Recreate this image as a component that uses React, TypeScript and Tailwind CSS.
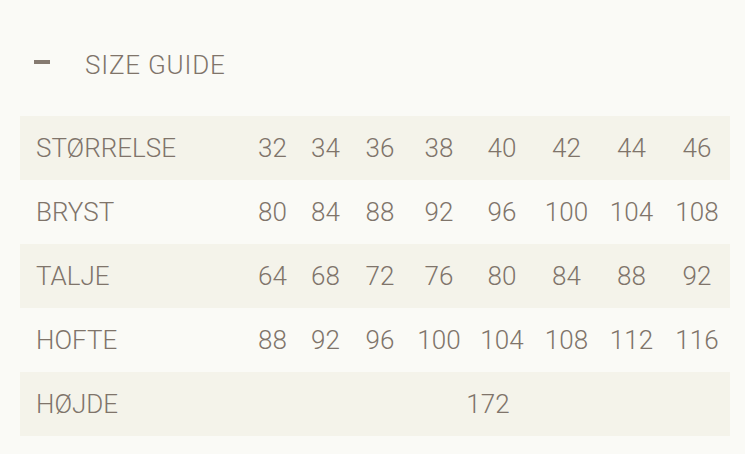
const sizes = ["32", "34", "36", "38", "40", "42", "44", "46"];

const rows: { label: string; values: string[] }[] = [
  { label: "BRYST", values: ["80", "84", "88", "92", "96", "100", "104", "108"] },
  { label: "TALJE", values: ["64", "68", "72", "76", "80", "84", "88", "92"] },
  { label: "HOFTE", values: ["88", "92", "96", "100", "104", "108", "112", "116"] },
];

const grid =
  "grid grid-cols-[226px_53px_53px_56px_62px_64px_65px_65px_66px] h-16 items-center";

function Row({ label, values, striped }: { label: string; values: string[]; striped?: boolean }) {
  return (
    <div className={`${grid} ${striped ? "bg-[#f4f3ea]" : ""}`}>
      <div className="pl-4">{label}</div>
      {values.map((v, i) => (
        <div key={i} className="text-center">
          {v}
        </div>
      ))}
    </div>
  );
}

export default function App() {
  return (
    <div
      className="min-h-[454px] w-[745px] bg-[#fafaf6] text-[#7f746a] text-[26px] font-light pt-[43px]"
      style={{ fontFamily: 'Roboto, "Liberation Sans", Arial, sans-serif' }}
    >
      <div className="flex items-center h-[44px] pl-[34px]">
        <span className="block w-4 h-[4px] bg-[#857a70] -translate-y-[3px]" />
        <span className="ml-[35px] tracking-[0.8px]">SIZE GUIDE</span>
      </div>
      <div className="ml-5 mr-[15px] mt-[29px]">
        <Row label="STØRRELSE" values={sizes} striped />
        {rows.map((r, i) => (
          <Row key={r.label} label={r.label} values={r.values} striped={i % 2 === 1} />
        ))}
        <div className={`${grid} bg-[#f4f3ea]`}>
          <div className="pl-4">HØJDE</div>
          <div className="col-span-8 text-center">172</div>
        </div>
      </div>
    </div>
  );
}
